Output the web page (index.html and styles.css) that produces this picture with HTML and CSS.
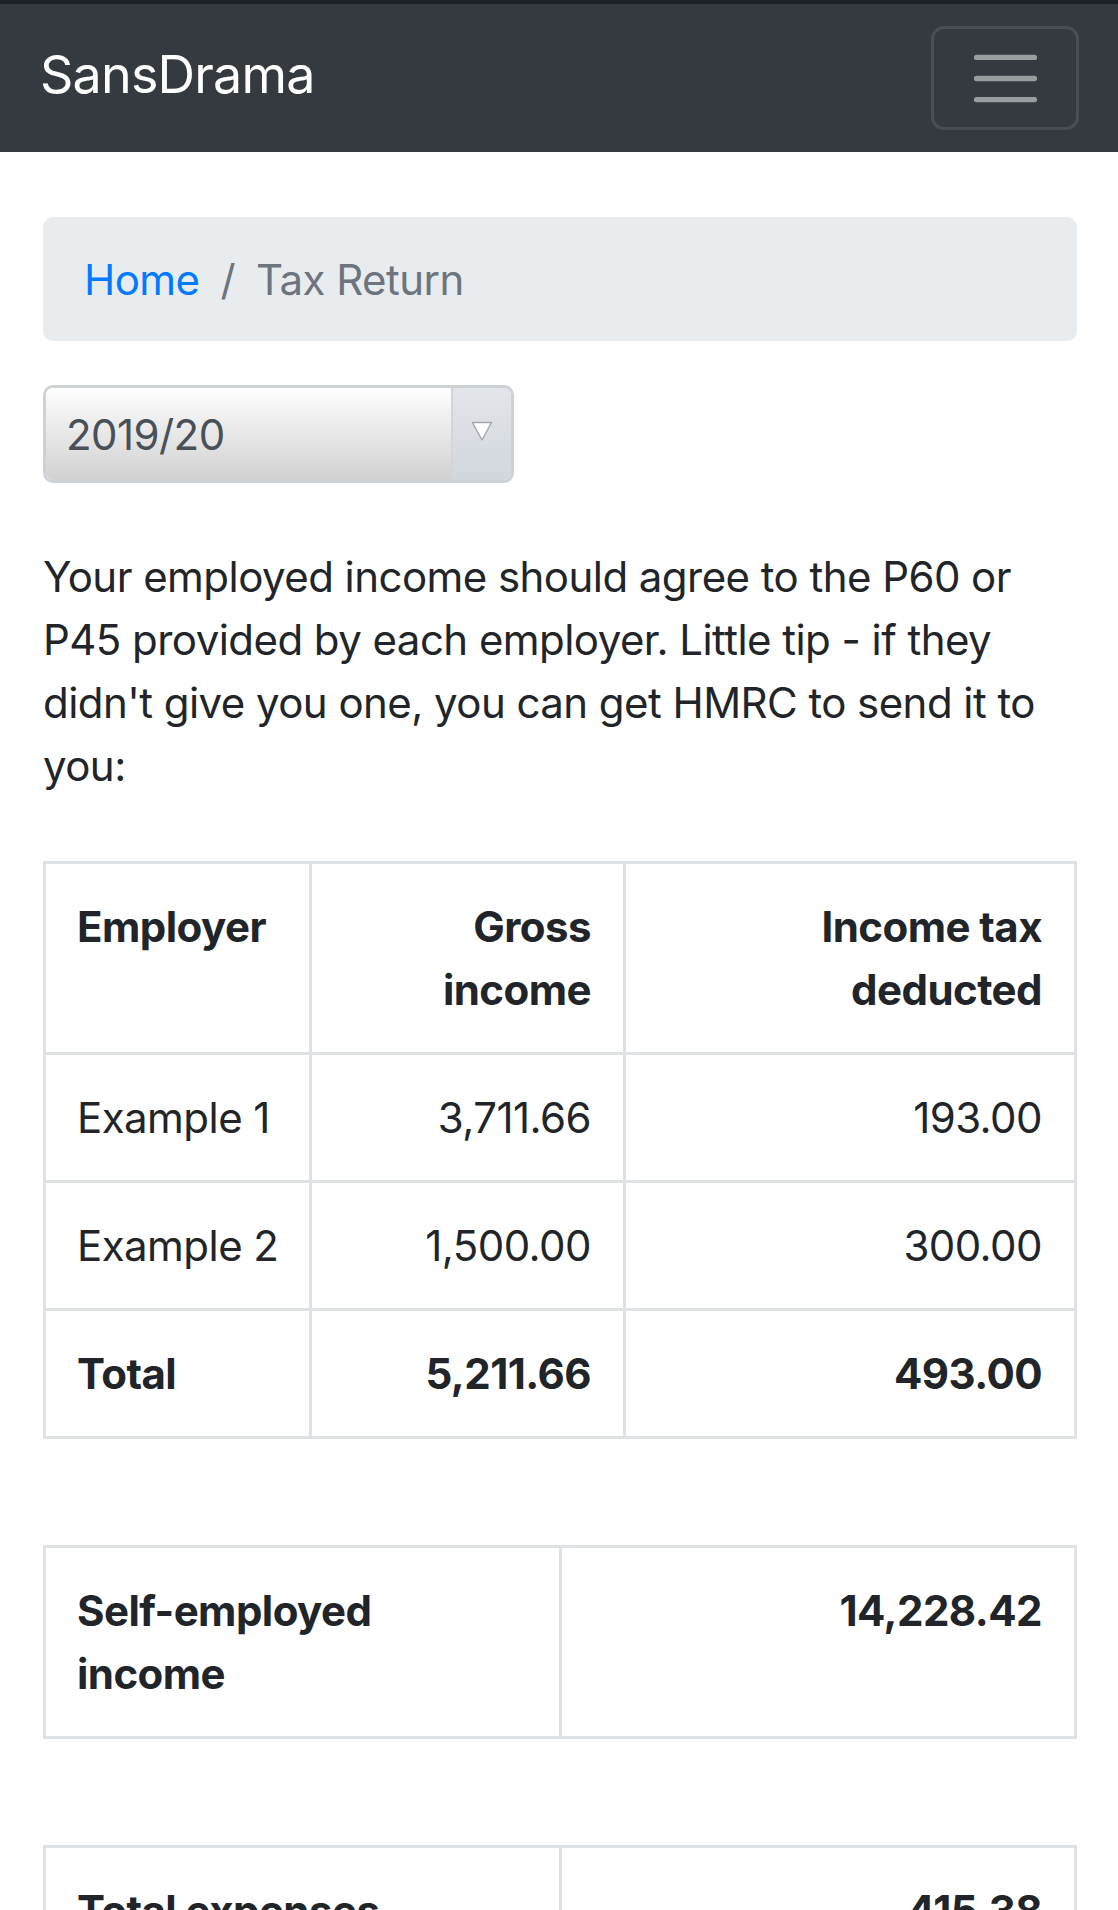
FILE: index.html
```html
<!DOCTYPE html>
<html lang="en">
<head>
<meta charset="utf-8">
<title>SansDrama - Tax Return</title>
<link rel="stylesheet" href="styles.css">
</head>
<body>
<nav class="navbar">
  <a class="brand" href="#">SansDrama</a>
  <button class="toggler" type="button" aria-label="Toggle navigation">
    <svg class="toggler-icon" viewBox="0 0 30 30" width="79" height="79"><path d="M4 7h22M4 15h22M4 23h22" stroke="rgba(255,255,255,0.5)" stroke-width="2" stroke-linecap="round" fill="none"/></svg>
  </button>
</nav>
<main class="container">
  <ol class="breadcrumb">
    <li class="crumb"><a href="#">Home</a></li>
    <li class="crumb-sep">/</li>
    <li class="crumb active">Tax Return</li>
  </ol>
  <div class="select">
    <span class="select-value">2019/20</span>
    <span class="select-arrow"><svg viewBox="0 0 22 22" width="22" height="22"><path d="M1.5 2.5h19L11 20z" fill="#fff" stroke="#a3a7ad" stroke-width="1.4" stroke-linejoin="round"/></svg></span>
  </div>
  <p class="intro">Your employed income should agree to the P60 or P45 provided by each employer. Little tip - if they didn't give you one, you can get HMRC to send it to you:</p>
  <table class="table table-employed">
    <thead>
      <tr><th class="c1">Employer</th><th class="c2 num">Gross income</th><th class="c3 num">Income tax deducted</th></tr>
    </thead>
    <tbody>
      <tr><td class="lbl">Example 1</td><td class="num">3,711.66</td><td class="num">193.00</td></tr>
      <tr><td class="lbl">Example 2</td><td class="num">1,500.00</td><td class="num">300.00</td></tr>
      <tr class="total"><td class="lbl">Total</td><td class="num">5,211.66</td><td class="num">493.00</td></tr>
    </tbody>
  </table>
  <table class="table table-half">
    <tr><th class="h">Self-employed income</th><th class="h num">14,228.42</th></tr>
  </table>
  <table class="table table-half">
    <tr><th class="h">Total expenses</th><th class="h num">415.38</th></tr>
  </table>
</main>
</body>
</html>
```
FILE: styles.css
```css
html, body {
  margin: 0;
  padding: 0;
}
body {
  font-family: "Inter", "Noto Sans", "Liberation Sans", sans-serif;
  font-size: 42px;
  line-height: 63px;
  letter-spacing: -0.55px;
  color: #212529;
  background: #fff;
}
.navbar {
  box-sizing: border-box;
  height: 152px;
  border-top: 4px solid #1d2024;
  background: #343a40;
  display: flex;
  align-items: center;
  justify-content: space-between;
  padding: 0 39px 0 40px;
}
.brand {
  color: #fff;
  text-decoration: none;
  font-size: 52px;
  line-height: 63px;
  letter-spacing: -0.8px;
  margin-top: -8px;
}
.toggler {
  box-sizing: border-box;
  width: 148px;
  height: 104px;
  background: transparent;
  border: 3px solid rgba(255,255,255,0.1);
  border-radius: 13px;
  display: flex;
  align-items: center;
  justify-content: center;
  padding: 0;
}
.toggler-icon {
  display: block;
}
.container {
  padding: 65px 41px 0 43px;
}
.breadcrumb {
  list-style: none;
  margin: 0 0 44px;
  box-sizing: border-box;
  height: 124px;
  padding: 0 41px;
  background: #e9ecef;
  border-radius: 10px;
  display: flex;
  align-items: center;
}
.crumb a {
  color: #007bff;
  text-decoration: none;
}
.crumb.active {
  color: #6c757d;
}
.crumb-sep {
  color: #6c757d;
  padding: 0 21px;
}
.select {
  box-sizing: border-box;
  width: 471px;
  height: 98px;
  display: flex;
  border: 3px solid #cdd2d8;
  border-radius: 10px;
  overflow: hidden;
  margin-bottom: 62px;
}
.select-value {
  flex: 1;
  display: flex;
  align-items: center;
  padding-left: 20px;
  color: #495057;
  background: linear-gradient(#fefefe, #d1d1d1);
}
.select-arrow {
  width: 58px;
  display: flex;
  align-items: center;
  justify-content: center;
  background: linear-gradient(#e2e5e9, #d2d7de);
  border-left: 2px solid #d2d6db;
}
.select-arrow svg {
  display: block;
  margin-top: -6px;
}
.intro {
  margin: 0 0 64px;
}
.table {
  width: 100%;
  border-collapse: collapse;
  table-layout: fixed;
  border: 3px solid #dee2e6;
  margin-bottom: 106px;
}
.table th,
.table td {
  border: 3px solid #dee2e6;
  padding: 31px 32px 31px 31px;
  vertical-align: top;
  text-align: left;
}
.table th {
  font-weight: 700;
}
.table .num {
  text-align: right;
}
.table .lbl {
  white-space: nowrap;
  padding-right: 20px;
}
.table-employed .c1 { width: 212px; }
.table-employed .c2 { width: 248px; }
.table-employed th.c1 { padding-right: 20px; }
.total td {
  font-weight: 700;
}
.table-half .h {
  width: 50%;
}
```
